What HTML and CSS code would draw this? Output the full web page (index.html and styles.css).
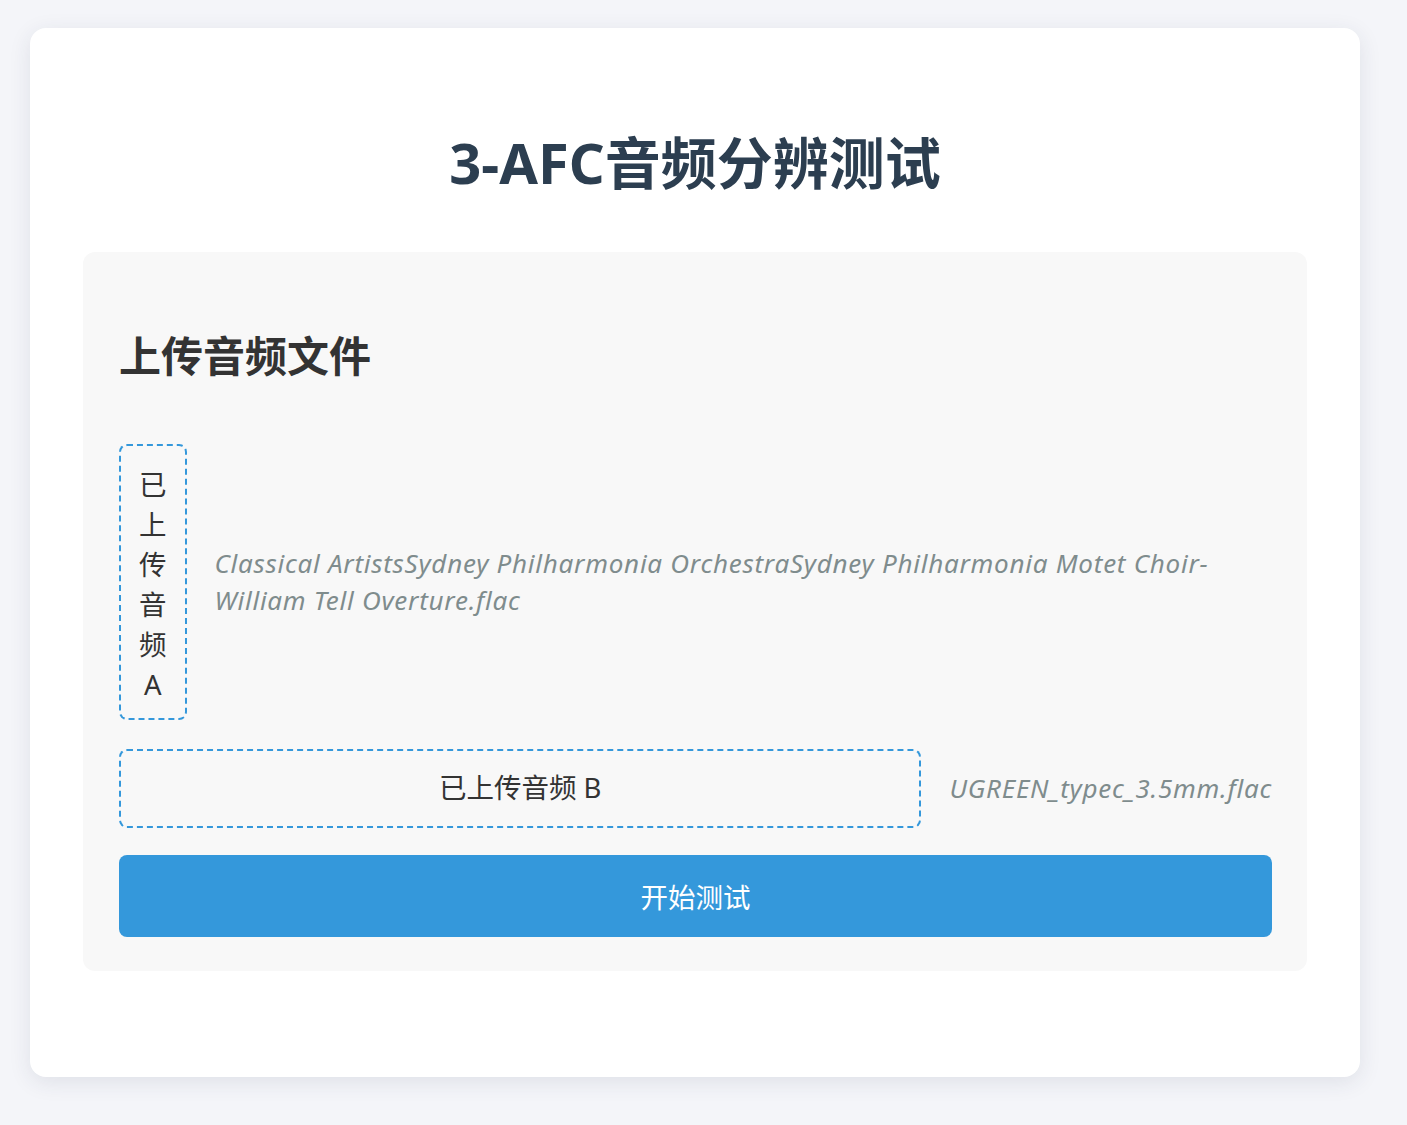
FILE: index.html
```html
<!DOCTYPE html>
<html lang="zh">
<head>
<meta charset="utf-8">
<title>3-AFC音频分辨测试</title>
<link rel="stylesheet" href="styles.css">
</head>
<body>
  <div class="container">
    <h1 class="title">3-AFC音频分辨测试</h1>
    <section class="upload-card">
      <h2 class="section-title">上传音频文件</h2>
      <div class="upload-row upload-row-a">
        <label class="upload-label">已上传音频 A</label>
        <span class="file-name">Classical ArtistsSydney Philharmonia OrchestraSydney Philharmonia Motet Choir-William Tell Overture.flac</span>
      </div>
      <div class="upload-row upload-row-b">
        <label class="upload-label">已上传音频 B</label>
        <span class="file-name">UGREEN_typec_3.5mm.flac</span>
      </div>
      <button class="start-btn">开始测试</button>
    </section>
  </div>
</body>
</html>
```

FILE: styles.css
```css
html, body {
  margin: 0;
  padding: 0;
}
body {
  background: #f4f5f9;
  font-family: "Noto Sans", "Noto Sans CJK SC", sans-serif;
  padding: 28px 47px 48px 30px;
  min-height: 1125px;
  box-sizing: border-box;
}
.container {
  width: 1330px;
  box-sizing: border-box;
  background: #ffffff;
  border-radius: 16px;
  box-shadow: 0 5px 22px rgba(40, 50, 80, 0.1);
  padding: 53px;
}
.title {
  margin: 47px 0 56px;
  font-size: 56px;
  line-height: 68px;
  font-weight: 700;
  color: #2c3e50;
  text-align: center;
}
.upload-card {
  background: #f8f8f8;
  border-radius: 12px;
  padding: 36px 35px 34px 36px;
  margin-bottom: 53px;
}
.section-title {
  margin: 43px 0 64px;
  font-size: 42px;
  line-height: 49px;
  font-weight: 700;
  color: #333333;
}
.upload-row {
  display: flex;
  align-items: center;
  gap: 28px;
}
.upload-row-a {
  margin-bottom: 29px;
}
.upload-row-b {
  margin-bottom: 27px;
}
.upload-label {
  flex: 1 1 0;
  min-width: min-content;
  border: 2px dashed #3498db;
  border-radius: 8px;
  padding: 19px 18px 13px;
  font-size: 27.5px;
  line-height: 40px;
  color: #333333;
  text-align: center;
  word-break: break-all;
}
.upload-row-b .upload-label {
  padding: 17px 18px 18px;
}
.file-name {
  flex: 0 1 auto;
  font-style: italic;
  font-size: 26px;
  letter-spacing: 0.75px;
  line-height: 37px;
  color: #7f8c8d;
}
.start-btn {
  display: block;
  width: 100%;
  height: 82px;
  border: none;
  border-radius: 8px;
  background: #3498db;
  color: #ffffff;
  font-family: "Noto Sans", "Noto Sans CJK SC", sans-serif;
  font-size: 27.5px;
  cursor: pointer;
}
```
